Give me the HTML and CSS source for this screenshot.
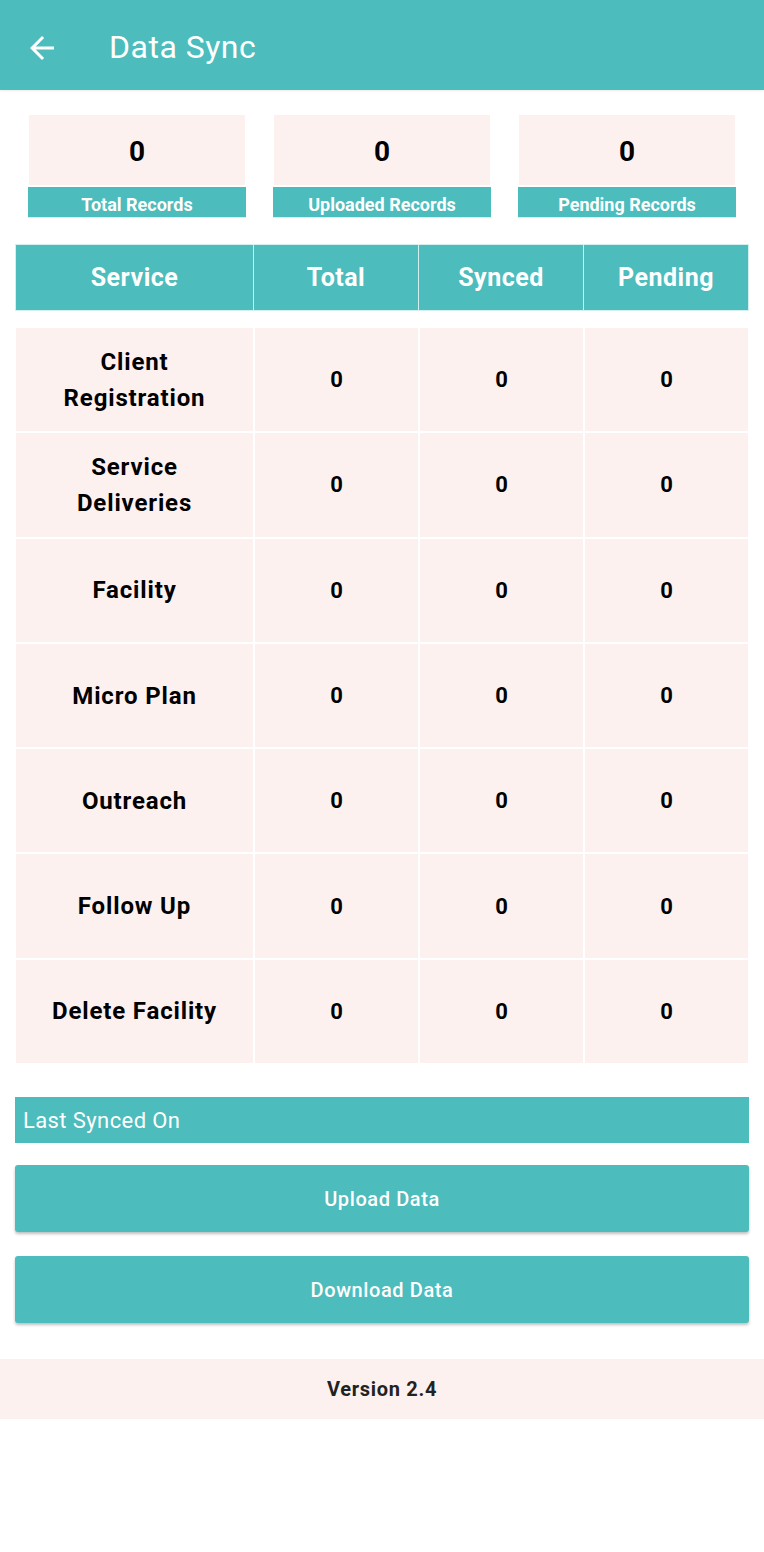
FILE: index.html
```html
<!DOCTYPE html>
<html lang="en">
<head>
<meta charset="utf-8">
<title>Data Sync</title>
<link rel="stylesheet" href="styles.css">
</head>
<body>
<header class="appbar">
  <svg class="back" viewBox="0 0 24 24" width="36" height="36" aria-hidden="true"><path fill="#fff" d="M20 11H7.83l5.59-5.59L12 4l-8 8 8 8 1.41-1.41L7.83 13H20v-2z"/></svg>
  <h1 class="title">Data Sync</h1>
</header>

<section class="cards">
  <div class="card"><div class="card-value">0</div><div class="card-label">Total Records</div></div>
  <div class="card"><div class="card-value">0</div><div class="card-label">Uploaded Records</div></div>
  <div class="card"><div class="card-value">0</div><div class="card-label">Pending Records</div></div>
</section>

<section class="table">
  <div class="thead">
    <div class="th">Service</div>
    <div class="th">Total</div>
    <div class="th">Synced</div>
    <div class="th">Pending</div>
  </div>
  <div class="tbody">
    <div class="td name">Client<br>Registration</div><div class="td">0</div><div class="td">0</div><div class="td">0</div>
    <div class="td name">Service<br>Deliveries</div><div class="td">0</div><div class="td">0</div><div class="td">0</div>
    <div class="td name">Facility</div><div class="td">0</div><div class="td">0</div><div class="td">0</div>
    <div class="td name">Micro Plan</div><div class="td">0</div><div class="td">0</div><div class="td">0</div>
    <div class="td name">Outreach</div><div class="td">0</div><div class="td">0</div><div class="td">0</div>
    <div class="td name">Follow Up</div><div class="td">0</div><div class="td">0</div><div class="td">0</div>
    <div class="td name">Delete Facility</div><div class="td">0</div><div class="td">0</div><div class="td">0</div>
  </div>
</section>

<section class="actions">
  <div class="last-synced">Last Synced On</div>
  <button class="btn btn-upload">Upload Data</button>
  <button class="btn btn-download">Download Data</button>
</section>

<footer class="version">Version 2.4</footer>
</body>
</html>
```

FILE: styles.css
```css
* { box-sizing: border-box; }

body {
  margin: 0;
  font-family: Roboto, "Noto Sans", "Liberation Sans", sans-serif;
  background: #ffffff;
  color: #000;
}

.appbar {
  height: 90px;
  background: #4cbcbc;
  display: flex;
  align-items: center;
  padding-left: 24px;
  box-shadow: 0 1px 2px rgba(0,0,0,0.08);
}

.back {
  display: block;
  margin-top: 6px;
}

.title {
  margin: 0 0 0 49px;
  font-size: 32px;
  font-weight: 400;
  letter-spacing: 0.5px;
  color: #fff;
  line-height: 1;
  padding-top: 4px;
}

.cards {
  display: grid;
  grid-template-columns: repeat(3, 1fr);
  column-gap: 27px;
  padding: 0 28px;
  margin-top: 25px;
}

.card {
  display: flex;
  flex-direction: column;
}

.card-value {
  margin: 0 1px;
  height: 70px;
  background: #fdf1f0;
  display: flex;
  align-items: center;
  justify-content: center;
  font-size: 28px;
  font-weight: 700;
  padding-top: 2px;
}

.card-label {
  margin-top: 2px;
  height: 31px;
  background: #4cbcbc;
  color: #fff;
  font-size: 18px;
  font-weight: 700;
  text-align: center;
  line-height: 18px;
  padding-top: 9px;
  overflow: hidden;
  border-bottom: 1px solid #cfeeed;
}

.table {
  padding: 0 15px;
  margin-top: 26px;
}

.thead {
  display: grid;
  grid-template-columns: 237px 1fr 1fr 1fr;
  column-gap: 1px;
  background: #d3efee;
  border: 1px solid #d3efee;
  height: 67px;
}

.th {
  background: #4cbcbc;
  color: #fff;
  font-size: 25px;
  font-weight: 700;
  letter-spacing: 0.5px;
  display: flex;
  align-items: center;
  justify-content: center;
}

.tbody {
  margin: 17px 1px 0;
  display: grid;
  grid-template-columns: 237px 1fr 1fr 1fr;
  grid-auto-rows: 103.3px;
  gap: 2px;
}

.td {
  background: #fdf1f0;
  display: flex;
  align-items: center;
  justify-content: center;
  text-align: center;
  font-size: 22px;
  font-weight: 700;
}

.td.name {
  font-size: 24px;
  line-height: 36px;
  letter-spacing: 0.85px;
}

.actions {
  padding: 0 15px;
  margin-top: 34px;
  display: flex;
  flex-direction: column;
}

.last-synced {
  height: 46px;
  background: #4cbcbc;
  color: #fff;
  font-size: 22px;
  font-weight: 400;
  letter-spacing: 0.4px;
  display: flex;
  align-items: center;
  padding-left: 8px;
}

.btn {
  height: 67px;
  border: none;
  border-radius: 3px;
  background: #4cbcbc;
  color: #fff;
  font-family: inherit;
  font-size: 20px;
  font-weight: 500;
  letter-spacing: 0.6px;
  box-shadow: 0 2px 3px rgba(0,0,0,0.25);
  padding: 0;
}

.btn-upload { margin-top: 22px; }
.btn-download { margin-top: 24px; }

.version {
  margin-top: 36px;
  height: 60px;
  background: #fdf1f0;
  display: flex;
  align-items: center;
  justify-content: center;
  font-size: 20px;
  font-weight: 700;
  letter-spacing: 0.7px;
  color: #222;
}
```
